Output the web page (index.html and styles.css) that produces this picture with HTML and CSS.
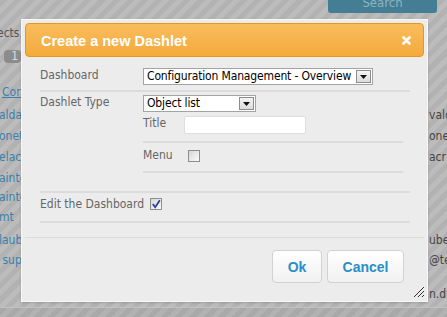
FILE: index.html
```html
<!DOCTYPE html>
<html>
<head>
<meta charset="utf-8">
<link rel="stylesheet" href="styles.css">
</head>
<body>
<div class="page">
  <div class="topbar"><span class="search">Search</span></div>
  <div class="info">ects.</div>
  <div class="pager"><span class="badge">1</span></div>
  <div class="list">
    <div class="row row-head"><a class="lnk ul">Con</a><span class="txt"></span></div>
    <div class="row"><span class="lnk">alda</span><span class="txt">vald</span></div>
    <div class="row"><span class="lnk">onet</span><span class="txt">onet</span></div>
    <div class="row"><span class="lnk">elac</span><span class="txt">acr</span></div>
    <div class="row"><span class="lnk">ainte</span><span class="txt"></span></div>
    <div class="row row-s"><span class="lnk">ainte</span><span class="txt"></span></div>
    <div class="row"><span class="lnk">mt</span><span class="txt"></span></div>
    <div class="row row-l"><span class="lnk">laub</span><span class="txt">ube</span></div>
    <div class="row"><span class="lnk">&nbsp;sup</span><span class="txt">@te</span></div>
    <div class="row row-xl"><span class="lnk"></span><span class="txt">n.d</span></div>
  </div>
  <div class="footerbar"></div>
</div>

<div class="dialog">
  <div class="dlg-head">
    <span class="dlg-title">Create a new Dashlet</span>
    <span class="close"><svg width="9" height="9" viewBox="0 0 9 9"><path d="M1.5 1.5 L7.5 7.5 M7.5 1.5 L1.5 7.5" stroke="#fff" stroke-width="2.6" stroke-linecap="round"/></svg></span>
  </div>
  <div class="dlg-body">
    <div class="frow r1">
      <span class="lbl">Dashboard</span>
      <div class="sel sel-wide"><span class="sel-text">Configuration Management - Overview</span><span class="sel-btn"><svg width="7" height="4" viewBox="0 0 7 4"><path d="M0 0 H7 L3.5 4 Z" fill="#111"/></svg></span></div>
    </div>
    <div class="frow r2">
      <span class="lbl">Dashlet Type</span>
      <div class="fcol">
        <div class="sel sel-narrow"><span class="sel-text">Object list</span><span class="sel-btn"><svg width="7" height="4" viewBox="0 0 7 4"><path d="M0 0 H7 L3.5 4 Z" fill="#111"/></svg></span></div>
        <div class="sub sub-title"><span class="slbl slbl-title">Title</span><span class="input"></span></div>
        <div class="sub sub-menu"><span class="slbl slbl-menu">Menu</span><span class="cb"></span></div>
      </div>
    </div>
    <div class="frow r3">
      <span class="lbl-inline">Edit the Dashboard</span>
      <span class="cb"><svg width="10" height="10" viewBox="0 0 10 10"><path d="M1.8 5 L4.2 8.2 L8.8 1.2" fill="none" stroke="#2c3f9c" stroke-width="1.8"/></svg></span>
    </div>
  </div>
  <div class="dlg-foot">
    <button class="btn btn-ok">Ok</button>
    <button class="btn btn-cancel">Cancel</button>
  </div>
  <svg class="grip" width="12" height="12" viewBox="0 0 12 12"><path d="M11 1 L1 11 M11 5 L5 11 M11 9 L9 11" stroke="#333" stroke-width="1"/></svg>
</div>
</body>
</html>
```
FILE: styles.css
```css
html, body {
  margin: 0;
  padding: 0;
}
body {
  width: 447px;
  height: 317px;
  overflow: hidden;
  position: relative;
  font-family: "DejaVu Sans Condensed", "DejaVu Sans", sans-serif;
  font-size: 12px;
  background: repeating-linear-gradient(135deg, #b2b2b2 0 5px, #bcbcbc 5px 10px);
}
.page {
  display: flex;
  flex-direction: column;
  height: 317px;
}
.topbar {
  display: flex;
  justify-content: flex-end;
  padding-right: 10px;
}
.search {
  width: 109px;
  height: 13px;
  background: #437e95;
  border-radius: 0 0 3px 3px;
  color: #8eb3c2;
  font-size: 13px;
  line-height: 6px;
  text-align: center;
  overflow: hidden;
}
.info {
  margin-top: 13px;
  height: 14px;
  line-height: 14px;
  color: #555;
  margin-left: -3px;
}
.pager {
  margin-top: 10px;
  padding-left: 4px;
  display: flex;
}
.badge {
  width: 17px;
  height: 13px;
  border-radius: 4px;
  background: #8c8c8c;
  color: #ddd;
  font-size: 12px;
  line-height: 13px;
  text-align: right;
  padding-right: 3px;
  box-sizing: border-box;
}
.list {
  margin-top: 21px;
  display: flex;
  flex-direction: column;
}
.row {
  display: grid;
  grid-template-columns: 429px 18px;
  height: 21px;
  line-height: 21px;
  white-space: nowrap;
}
.row-head {
  height: 17px;
  line-height: 17px;
  margin-bottom: 4px;
}
.row-s { height: 18px; line-height: 16px; }
.row-l { height: 22px; line-height: 24px; }
.row-xl { height: 36px; line-height: 46px; }
.lnk {
  color: #3a80ad;
  overflow: hidden;
  margin-left: -1px;
}
.ul { text-decoration: underline; margin-left: 2px; }
.txt {
  color: #444;
  overflow: hidden;
}
.footerbar {
  flex: 1;
  border-top: 1px solid #c2c2c2;
  background: repeating-linear-gradient(135deg, #a9a9a9 0 5px, #b2b2b2 5px 10px);
}

/* dialog */
.dialog {
  position: absolute;
  left: 21px;
  top: 19px;
  width: 407px;
  height: 283px;
  box-sizing: border-box;
  border: 1px solid #f8f8f8;
  padding: 3px 3px 0 3px;
  background: #ececec;
  display: flex;
  flex-direction: column;
  box-shadow: 0 1px 2px rgba(0,0,0,0.15);
}
.dlg-head {
  height: 34px;
  box-sizing: border-box;
  border: 1px solid #e9961c;
  border-radius: 4px;
  background: linear-gradient(#f8bd5d, #f4aa3c);
  display: flex;
  align-items: center;
  justify-content: space-between;
  padding: 0 12px 0 15px;
}
.dlg-title {
  color: #fff;
  font-family: "Liberation Sans", Arial, sans-serif;
  font-weight: bold;
  font-size: 14.5px;
  padding-top: 1px;
}
.close {
  display: flex;
}
.dlg-body {
  padding: 0 14px 0 15px;
  color: #666;
}
.frow {
  display: flex;
  border-bottom: 2px solid #dcdcdc;
}
.r1 { padding: 11px 0 5px; }
.r2 { padding: 3px 0 18px; }
.r3 { padding: 5px 0 11px; align-items: center; }
.lbl {
  width: 103px;
  flex: none;
  height: 17px;
  line-height: 15px;
}
.lbl-inline {
  height: 12px;
  line-height: 12px;
  margin-right: 6px;
}
.sel {
  height: 17px;
  box-sizing: border-box;
  border: 1px solid #a3a3a3;
  background: #fff;
  display: flex;
  align-items: center;
  color: #000;
}
.sel-wide { width: 230px; }
.sel-narrow { width: 113px; }
.sel-text {
  flex: 1;
  padding-left: 3px;
  line-height: 15px;
  white-space: nowrap;
  overflow: hidden;
  letter-spacing: -0.15px;
}
.sel-btn {
  width: 15px;
  height: 13px;
  box-sizing: border-box;
  border: 1px solid #8c8c8c;
  background: linear-gradient(#f4f4f4, #dcdcdc);
  margin-right: 1px;
  display: flex;
  align-items: center;
  justify-content: center;
  flex: none;
}
.fcol {
  display: flex;
  flex-direction: column;
  flex: 1;
}
.sub {
  display: flex;
  align-items: center;
  margin-right: 7px;
  border-bottom: 2px solid #dcdcdc;
}
.sub-title { padding: 4px 0 7px; }
.sub-menu { padding: 7px 0 9px; }
.slbl-title { width: 41px; align-self: flex-start; line-height: 14px; }
.slbl-menu { width: 45px; align-self: flex-start; line-height: 10px; }
.input {
  width: 122px;
  height: 18px;
  box-sizing: border-box;
  border: 1px solid #dedede;
  border-radius: 2px;
  background: #fff;
}
.cb {
  width: 12px;
  height: 12px;
  box-sizing: border-box;
  border: 1px solid #8e8e8e;
  background: linear-gradient(135deg, #d6d6d6, #fbfbfb);
  display: flex;
  align-items: center;
  justify-content: center;
}
.dlg-foot {
  margin-top: 14px;
  border-top: 1px solid #dcdcdc;
  padding: 12px 20px 0 0;
  display: flex;
  justify-content: flex-end;
  gap: 5px;
}
.btn {
  height: 33px;
  box-sizing: border-box;
  border: 1px solid #d2d2d2;
  border-radius: 4px;
  background: linear-gradient(#ffffff, #f1f1f1);
  color: #2a8fc8;
  font-family: "Liberation Sans", Arial, sans-serif;
  font-weight: bold;
  font-size: 14px;
  padding: 0;
}
.btn-ok { width: 50px; }
.btn-cancel { width: 77px; }
.grip {
  position: absolute;
  right: 2px;
  bottom: 3px;
}
```
